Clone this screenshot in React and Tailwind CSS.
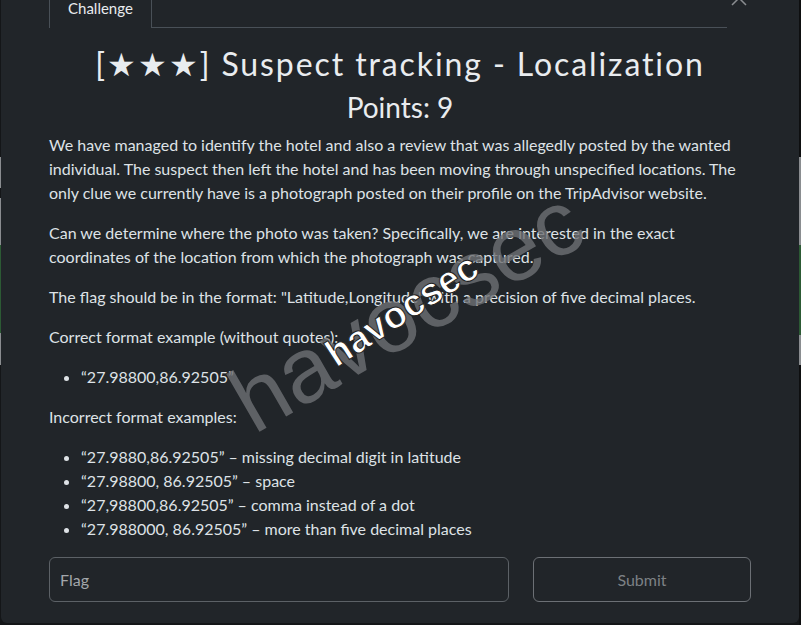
import React from 'react';

const examples = [
  { code: '“27.9880,86.92505”', note: 'missing decimal digit in latitude' },
  { code: '“27.98800, 86.92505”', note: 'space' },
  { code: '“27,98800,86.92505”', note: 'comma instead of a dot' },
  { code: '“27.988000, 86.92505”', note: 'more than five decimal places' },
];

const App = () => {
  return (
    <div className="w-[801px] h-[625px] bg-[#141618] flex overflow-hidden relative font-['Lato','Noto_Sans',sans-serif]">
      {/* backdrop edge showing page behind */}
      <div className="w-[1px] flex flex-col">
        <div className="h-[157px]" />
        <div className="h-[31px] bg-[#8a8d90]" />
        <div className="h-[10px]" />
        <div className="h-[47px] bg-[#8a8d90]" />
        <div className="h-[88px] bg-[#2c5a34]" />
        <div className="h-[32px] bg-[#8a8d90]" />
      </div>

      {/* Modal */}
      <div className="w-[798px] h-[623px] bg-[#212529] rounded-b-[6px] px-12 flex flex-col text-[#dee2e6]">
        {/* Tabs + close */}
        <div className="flex mt-[-12px]">
          <div className="flex-1 flex border-b border-[#495057]">
            <div className="px-[18px] h-[40px] flex items-center text-[15px] text-[#e9ecef] border-l border-r border-[#495057] -mb-px bg-[#212529]">
              Challenge
            </div>
          </div>
          <div className="w-6 flex items-center justify-center">
            <svg width="16" height="16" viewBox="0 0 16 16" className="mt-[-20px]">
              <path d="M1 1L15 15M15 1L1 15" stroke="#8a8d90" strokeWidth="1.5" />
            </svg>
          </div>
        </div>

        <h1 className="mt-[17px] text-center text-[32px] leading-[38px] tracking-[1.9px] text-[#e9ecef]">
          [★★★] Suspect tracking - Localization
        </h1>
        <h2 className="mt-[7px] text-center text-[28px] leading-[34px] text-[#e9ecef]">Points: 9</h2>

        <div className="mt-[9px] text-[16px] leading-[24px]">
          <p className="mb-4">
            We have managed to identify the hotel and also a review that was allegedly posted by the wanted
            individual. The suspect then left the hotel and has been moving through unspecified locations. The
            only clue we currently have is a photograph posted on their profile on the TripAdvisor website.
          </p>
          <p className="mb-4">
            Can we determine where the photo was taken? Specifically, we are interested in the exact
            coordinates of the location from which the photograph was captured.
          </p>
          <p className="mb-4">
            The flag should be in the format: "Latitude,Longitude" with a precision of five decimal places.
          </p>
          <p className="mb-4">Correct format example (without quotes):</p>
          <ul className="mb-4 pl-8 list-disc">
            <li>“27.98800,86.92505”</li>
          </ul>
          <p className="mb-4">Incorrect format examples:</p>
          <ul className="mb-4 pl-8 list-disc">
            {examples.map((e) => (
              <li key={e.code}>
                {e.code} – {e.note}
              </li>
            ))}
          </ul>
        </div>

        <div className="grid grid-cols-[460px_218px] gap-6">
          <div className="h-[45px] border border-[#5c6166] rounded-[6px] flex items-center px-[10px] text-[16px] text-[#a3a7ab]">
            Flag
          </div>
          <div className="h-[45px] border border-[#6c7075] rounded-[6px] flex items-center justify-center text-[16px] text-[#7d8185]">
            Submit
          </div>
        </div>
      </div>

      {/* backdrop edge right */}
      <div className="w-[2px] flex flex-col bg-[#0e0f10]">
        <div className="h-[157px]" />
        <div className="h-[88px] bg-[#8a8d90]" />
        <div className="h-[90px] bg-[#2c5a34]" />
        <div className="h-[30px] bg-[#8a8d90]" />
      </div>

      {/* watermark */}
      <div className="absolute left-[212px] top-[264px] w-[389px] h-[92px] origin-center rotate-[-30deg] text-[92px] leading-none text-[#6e7174]/80 font-['Liberation_Sans',Arial,sans-serif] pointer-events-none select-none">
        havocsec
      </div>
      <div className="absolute left-[316px] top-[292px] w-[169px] h-[40px] origin-center rotate-[-33deg] text-[38px] font-bold leading-none text-white font-['Liberation_Sans',Arial,sans-serif] [-webkit-text-stroke:1px_#222] pointer-events-none select-none">
        havocsec
      </div>
    </div>
  );
};

export default App;
